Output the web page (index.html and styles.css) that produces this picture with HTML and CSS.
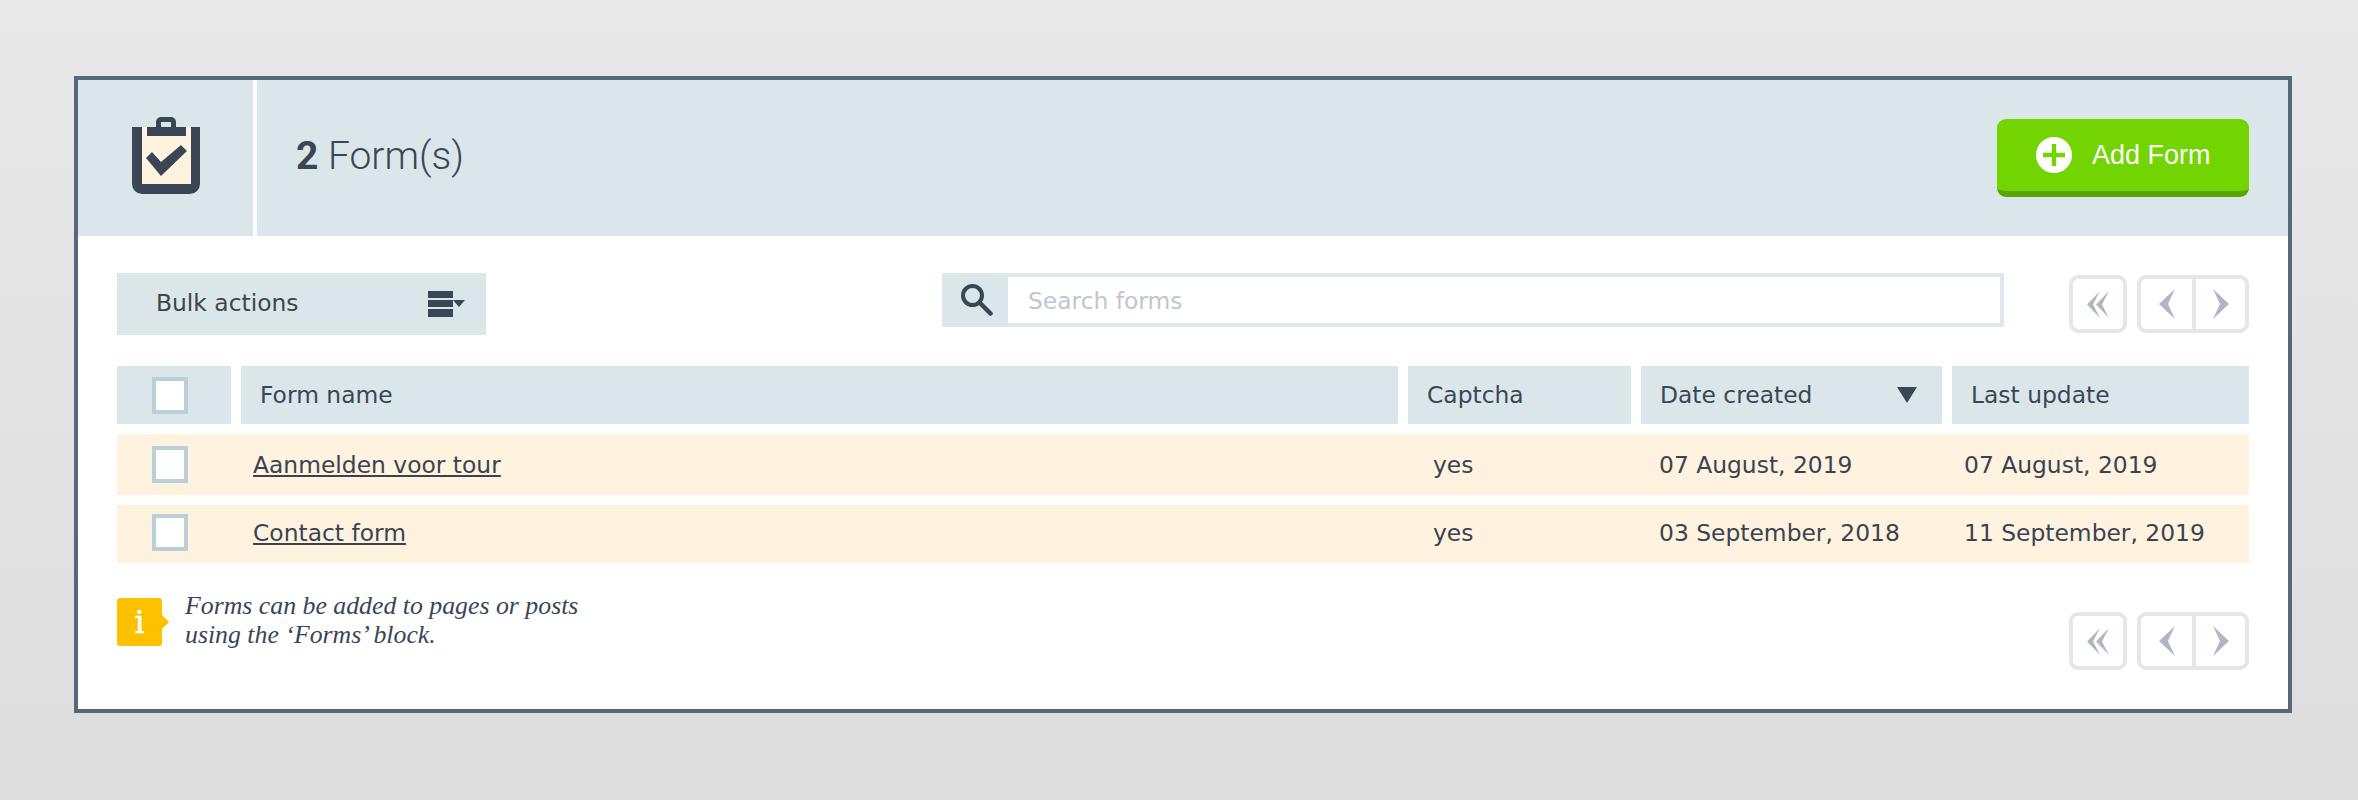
FILE: index.html
```html
<!DOCTYPE html>
<html lang="en">
<head>
<meta charset="utf-8">
<title>Forms</title>
<link rel="stylesheet" href="styles.css">
</head>
<body>
<main class="panel">
  <header class="head">
    <div class="head-icon">
      <svg class="fill-svg" viewBox="78 80 175 156" aria-hidden="true">
        <rect x="142" y="127" width="49" height="57" fill="#fff3e0"/>
        <path fill="#3a4656" d="M132 127h10v57h49v-57h9v57a10 10 0 0 1-10 10h-48a10 10 0 0 1-10-10z"/>
        <path fill="#3a4656" fill-rule="evenodd" d="M147 127h9v-5a5 5 0 0 1 5-5h10a5 5 0 0 1 5 5v5h10v9h-39zM161 122v5h10v-5z"/>
        <polygon fill="#3a4656" points="146,158 152,152 161,162 181,145 187,151 161,176"/>
      </svg>
    </div>
    <h1 class="count"><b>2</b> Form(s)</h1>
    <a class="add-btn" href="#">
      <svg class="add-icon" viewBox="0 0 36 36" aria-hidden="true">
        <circle cx="18" cy="18" r="18" fill="#fff"/>
        <path fill="#72d400" d="M15.800 7h4.400v8.800H29v4.400h-8.800V29h-4.400v-8.800H7v-4.400h8.800z"/>
      </svg>
      <span>Add Form</span>
    </a>
  </header>
  <section class="body">
    <div class="toolbar">
      <div class="bulk">
        <span>Bulk actions</span>
        <svg class="bulk-icon" viewBox="0 0 37 26" aria-hidden="true">
          <path fill="#3a4656" d="M0 0h25v7H0zM0 9h25v7H0zM0 18h25v8H0zM25 9h12l-6 7z"/>
        </svg>
      </div>
      <div class="search">
        <div class="search-icon">
          <svg viewBox="0 0 32 32" width="32" height="32" aria-hidden="true">
            <circle cx="11.500" cy="11.500" r="9.500" fill="none" stroke="#3a4656" stroke-width="4"/>
            <path d="M19 19l10.500 10.500" stroke="#3a4656" stroke-width="4.500" stroke-linecap="round"/>
          </svg>
        </div>
        <input class="search-input" type="text" placeholder="Search forms">
      </div>
      <nav class="pager">
        <a class="page-btn page-first" href="#">
          <svg viewBox="0 0 22 27" width="22" height="27" aria-hidden="true"><path fill="#b0b6c4" d="M13 0 0 13.500 13 27 6 13.500zM22 0 9 13.500 22 27l-7-13.500z"/></svg>
        </a>
        <div class="page-group">
          <a class="page-btn page-half" href="#">
            <svg viewBox="0 0 16 30" width="16" height="30" aria-hidden="true"><path fill="#b0b6c4" d="M16 0 0 15l16 15-7-15z"/></svg>
          </a>
          <a class="page-btn page-half" href="#">
            <svg viewBox="0 0 16 30" width="16" height="30" aria-hidden="true"><path fill="#b0b6c4" d="M0 0l16 15L0 30l7-15z"/></svg>
          </a>
        </div>
      </nav>
    </div>

    <div class="table" role="table">
      <div class="row row-head" role="row">
        <div class="th th-check"><span class="check"></span></div>
        <div class="th">Form name</div>
        <div class="th">Captcha</div>
        <div class="th th-sort">Date created <svg class="sort" viewBox="0 0 20 16" width="20" height="16" aria-hidden="true"><path fill="#3a4656" d="M0 0h20L10 16z"/></svg></div>
        <div class="th">Last update</div>
      </div>
      <div class="row row-body row-first" role="row">
        <div class="td td-check"><span class="check"></span></div>
        <div class="td td-name"><a href="#">Aanmelden voor tour</a></div>
        <div class="td td-captcha">yes</div>
        <div class="td td-date">07 August, 2019</div>
        <div class="td td-name">07 August, 2019</div>
      </div>
      <div class="row row-body row-last" role="row">
        <div class="td td-check"><span class="check"></span></div>
        <div class="td td-name"><a href="#">Contact form</a></div>
        <div class="td td-captcha">yes</div>
        <div class="td td-date">03 September, 2018</div>
        <div class="td td-name">11 September, 2019</div>
      </div>
    </div>

    <div class="foot">
      <div class="note">
        <span class="info">i</span>
        <p class="note-text">Forms can be added to pages or posts<br>using the ‘Forms’ block.</p>
      </div>
      <nav class="pager pager-foot">
        <a class="page-btn page-first" href="#">
          <svg viewBox="0 0 22 27" width="22" height="27" aria-hidden="true"><path fill="#b0b6c4" d="M13 0 0 13.500 13 27 6 13.500zM22 0 9 13.500 22 27l-7-13.500z"/></svg>
        </a>
        <div class="page-group">
          <a class="page-btn page-half" href="#">
            <svg viewBox="0 0 16 30" width="16" height="30" aria-hidden="true"><path fill="#b0b6c4" d="M16 0 0 15l16 15-7-15z"/></svg>
          </a>
          <a class="page-btn page-half" href="#">
            <svg viewBox="0 0 16 30" width="16" height="30" aria-hidden="true"><path fill="#b0b6c4" d="M0 0l16 15L0 30l7-15z"/></svg>
          </a>
        </div>
      </nav>
    </div>
  </section>
</main>
</body>
</html>
```

FILE: styles.css
```css
* { box-sizing: border-box; }
html, body { height: 100%; }
body {
  margin: 0;
  height: 800px;
  overflow: hidden;
  padding: 76px 66px 0 74px;
  background: linear-gradient(#e9e9e9, #dddddd);
  font-family: "DejaVu Sans", Verdana, sans-serif;
  font-size: 23.4px;
  color: #3a4351;
}
.panel {
  height: 637px;
  border: 4px solid #566879;
  background: #fff;
}
.head {
  display: flex;
  align-items: center;
  height: 156px;
  padding-right: 39px;
  background: #dbe6eb;
}
.head-icon {
  width: 175px;
  height: 156px;
  flex: none;
}
.fill-svg { display: block; width: 175px; height: 156px; }
.count {
  flex: 1;
  height: 156px;
  margin: 0;
  padding-left: 39px;
  border-left: 4px solid #fff;
  font: 300 39px/152px Roboto, "Liberation Sans", sans-serif;
  color: #3a4656;
}
.count b { font-weight: 700; }
.add-btn {
  display: flex;
  align-items: center;
  gap: 20px;
  width: 252px;
  height: 78px;
  padding-left: 39px;
  border-bottom: 6px solid #5aa300;
  border-radius: 9px;
  background: #72d400;
  color: #fff;
  text-decoration: none;
  font: 27px "Liberation Sans", Arial, sans-serif;
}
.add-icon { width: 36px; height: 36px; flex: none; }
.body { padding: 37px 39px 0; }
.toolbar { display: flex; align-items: center; height: 62px; }
.bulk {
  display: flex;
  align-items: center;
  justify-content: space-between;
  width: 369px;
  height: 62px;
  padding: 0 21px 2px 39px;
  background: #dbe6eb;
  color: #404448;
}
.bulk-icon { width: 37px; height: 26px; flex: none; margin-top: 2px; }
.search {
  display: flex;
  align-self: flex-start;
  width: 1062px;
  height: 54px;
  margin-left: 456px;
  border: 4px solid #dfe9ed;
  border-left: 0;
}
.search-icon {
  display: flex;
  align-items: center;
  justify-content: center;
  flex: none;
  width: 66px;
  margin: -4px 0;
  padding-left: 4px;
  background: #dbe6eb;
}
.search-input {
  flex: 1;
  min-width: 0;
  padding: 2px 0 0 20px;
  border: 0;
  outline: 0;
  background: #fff;
  font: 23.4px "DejaVu Sans", Verdana, sans-serif;
}
.search-input::placeholder { color: #c0c5d2; opacity: 1; }
.pager { display: flex; gap: 10px; margin-left: auto; }
.page-btn {
  display: flex;
  align-items: center;
  justify-content: center;
  height: 58px;
  border: 4px solid #e3e6eb;
  border-radius: 9px;
  background: #fff;
}
.page-first { width: 58px; }
.page-group { display: flex; width: 112px; }
.page-half:first-child { width: 55px; border-radius: 9px 0 0 9px; border-right: 0; }
.page-half:last-child { width: 57px; border-radius: 0 9px 9px 0; }
.table {
  display: flex;
  flex-direction: column;
  gap: 10px;
  margin-top: 31px;
}
.row {
  display: grid;
  grid-template-columns: 114px 1157px 223px 301px 297px;
  column-gap: 10px;
}
.row-head { height: 58px; }
.row-body { height: 58px; background: #fff3e0; }
.row-first { height: 61px; }
.row-last { padding-bottom: 3px; }
.th, .td { display: flex; align-items: center; }
.th { padding-left: 19px; background: #dbe6eb; color: #3a4656; }
.th-check, .td-check { padding-left: 35px; }
.th-sort { justify-content: space-between; padding-right: 25px; }
.check {
  display: block;
  width: 36px;
  height: 37px;
  border: 4px solid #b9d0da;
  background: #fff;
}
.td-name { padding-left: 12px; }
.td-captcha { padding-left: 25px; }
.td-date { padding-left: 18px; }
.td a { color: inherit; }
.foot { display: flex; justify-content: space-between; padding-top: 35px; }
.note { display: flex; align-items: flex-start; gap: 23px; }
.info {
  position: relative;
  display: flex;
  align-items: center;
  justify-content: center;
  width: 45px;
  height: 48px;
  border-radius: 3px;
  background: #ffc000;
  color: #fff;
  font: 400 32px "DejaVu Serif", serif;
  -webkit-text-stroke: 0.6px #fff;
}
.info::after {
  content: "";
  position: absolute;
  top: 19px;
  right: -5px;
  width: 10px;
  height: 10px;
  background: #ffc000;
  transform: rotate(45deg);
}
.note-text {
  margin: -7px 0 0;
  font: italic 25.8px/29px "Liberation Serif", Georgia, serif;
  color: #3a4656;
}
.pager-foot { margin-top: 14px; }
```
